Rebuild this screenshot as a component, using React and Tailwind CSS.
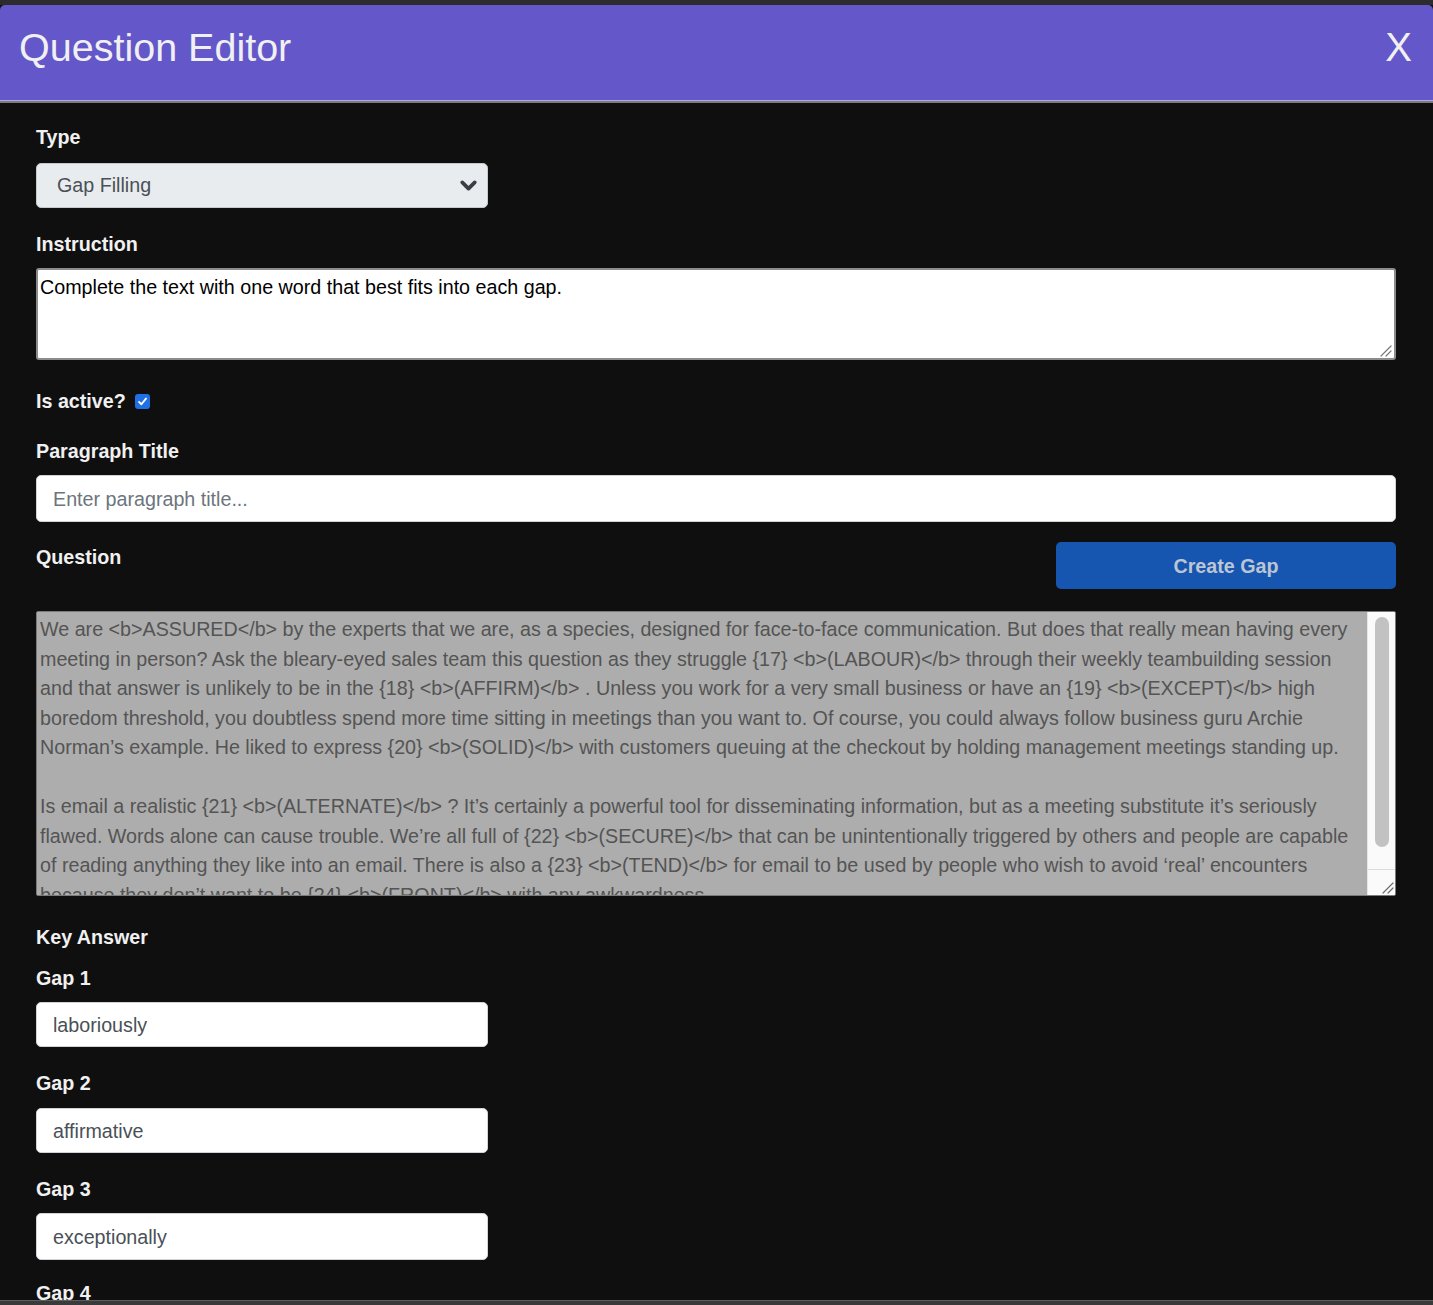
import { ChevronDown } from "lucide-react"

const QUESTION_LINES = [
  "We are <b>ASSURED</b> by the experts that we are, as a species, designed for face-to-face communication. But does that really mean having every",
  "meeting in person? Ask the bleary-eyed sales team this question as they struggle {17} <b>(LABOUR)</b> through their weekly teambuilding session",
  "and that answer is unlikely to be in the {18} <b>(AFFIRM)</b> . Unless you work for a very small business or have an {19} <b>(EXCEPT)</b> high",
  "boredom threshold, you doubtless spend more time sitting in meetings than you want to. Of course, you could always follow business guru Archie",
  "Norman’s example. He liked to express {20} <b>(SOLID)</b> with customers queuing at the checkout by holding management meetings standing up.",
  "",
  "Is email a realistic {21} <b>(ALTERNATE)</b> ? It’s certainly a powerful tool for disseminating information, but as a meeting substitute it’s seriously",
  "flawed. Words alone can cause trouble. We’re all full of {22} <b>(SECURE)</b> that can be unintentionally triggered by others and people are capable",
  "of reading anything they like into an email. There is also a {23} <b>(TEND)</b> for email to be used by people who wish to avoid ‘real’ encounters",
  "because they don’t want to be {24} <b>(FRONT)</b> with any awkwardness",
]

const GAPS = [
  { label: "Gap 1", value: "laboriously", mt: "mt-[17px]", gap: "mt-[12px]", h: "h-[45px]" },
  { label: "Gap 2", value: "affirmative", mt: "mt-[24px]", gap: "mt-[13px]", h: "h-[45px]" },
  { label: "Gap 3", value: "exceptionally", mt: "mt-[24px]", gap: "mt-[12px]", h: "h-[47px]" },
]

function Label({ children, className = "" }) {
  return (
    <div className={`text-[19.7px] font-bold leading-[24px] text-[#f1f1f1] ${className}`}>{children}</div>
  )
}

function Grip({ color = "#8a8a8a" }) {
  return (
    <svg width="13" height="13" viewBox="0 0 13 13">
      <path d="M12 2 L2 12 M12 7 L7 12" stroke={color} strokeWidth="1.2" strokeLinecap="round" />
    </svg>
  )
}

function TextField({ value, placeholder, className = "h-[45px]" }) {
  return (
    <div
      className={`flex items-center bg-white border border-[#ced4da] rounded-[5px] pl-[16px] pt-[2px] text-[19.7px] ${className} ${
        value ? "text-[#495057]" : "text-[#6c757d]"
      }`}
    >
      {value || placeholder}
    </div>
  )
}

export default function App() {
  return (
    <div className="h-[1305px] w-full overflow-hidden flex flex-col bg-[#0f0f0f] font-['Liberation_Sans',Arial,sans-serif]">
      <div className="h-[5px] bg-[#2c2c2f]" />

      {/* header */}
      <div className="h-[95px] bg-[#6457c9] rounded-t-[5px] flex items-center justify-between pl-[19px] pr-[21px]">
        <h1 className="text-[39.5px] leading-none text-[#f0f0f0] -mt-[10px]">Question Editor</h1>
        <button type="button" className="text-[40px] leading-none text-[#f0f0f0] -mt-[12px]">
          X
        </button>
      </div>
      <div className="h-[1px] bg-[#aea6f2]" />
      <div className="h-[2px] bg-[#7c7c7c]" />

      {/* body */}
      <div className="flex-1 overflow-hidden pt-[22px] pl-[36px] pr-[37px]">
        <Label>Type</Label>
        <div className="mt-[14px] w-[452px] h-[45px] flex items-center justify-between bg-[#e9ecef] border border-[#c4c9ce] rounded-[5px] pl-[20px] pr-[6px] text-[19.7px] text-[#495057]">
          <span>Gap Filling</span>
          <ChevronDown size={25} strokeWidth={3.6} className="text-[#3a3f45]" />
        </div>

        <Label className="mt-[24px]">Instruction</Label>
        <div className="relative mt-[12px] h-[92px] bg-white border-2 border-[#8c8c8c] rounded-[3px] pl-[2px] pt-[5px] text-[19.7px] leading-[24px] text-black">
          Complete the text with one word that best fits into each gap.
          <div className="absolute right-[2px] bottom-[1px]">
            <Grip color="#7a7a7a" />
          </div>
        </div>

        <div className="mt-[29px] flex items-center gap-[9px]">
          <Label>Is active?</Label>
          <span className="w-[15px] h-[15px] rounded-[3px] bg-[#1f6fe5] flex items-center justify-center">
            <svg width="11" height="11" viewBox="0 0 12 12">
              <path d="M2.2 6.4 L4.8 9 L9.8 2.8" fill="none" stroke="white" strokeWidth="2" strokeLinecap="round" strokeLinejoin="round" />
            </svg>
          </span>
        </div>

        <Label className="mt-[26px]">Paragraph Title</Label>
        <TextField placeholder="Enter paragraph title..." className="mt-[12px] h-[47px]" />

        <div className="mt-[20px] h-[47px] flex justify-between">
          <Label className="pt-[3px]">Question</Label>
          <button
            type="button"
            className="w-[340px] h-[47px] bg-[#1656b0] rounded-[5px] pt-[2px] text-[19.7px] font-bold text-[#bcc5d3]"
          >
            Create Gap
          </button>
        </div>

        <div className="mt-[22px] h-[285px] flex bg-[#adadad] border border-[#7a7a7a] rounded-[2px] overflow-hidden">
          <div className="flex-1 overflow-hidden pl-[3px] pt-[3px] text-[19.7px] leading-[29.5px] text-[#545454]">
            {QUESTION_LINES.map((line, i) => (
              <div key={i} className="whitespace-nowrap h-[29.5px]">
                {line}
              </div>
            ))}
          </div>
          <div className="w-[28px] bg-[#fafafa] border-l border-[#e6e6e6] flex flex-col">
            <div className="mt-[5px] ml-[7px] w-[14px] h-[230px] rounded-full bg-[#c2c2c2]" />
            <div className="flex-1" />
            <div className="h-[26px] border-t border-[#dcdcdc] flex items-end justify-end pr-[1px] pb-[1px]">
              <Grip color="#6e6e6e" />
            </div>
          </div>
        </div>

        <Label className="mt-[29px]">Key Answer</Label>
        {GAPS.map((g) => (
          <div key={g.label}>
            <Label className={g.mt}>{g.label}</Label>
            <div className={`${g.gap} w-[452px]`}>
              <TextField value={g.value} className={g.h} />
            </div>
          </div>
        ))}
        <Label className="mt-[21px]">Gap 4</Label>
      </div>

      <div className="h-[1px] bg-[#5e5e5e]" />
      <div className="h-[4px] bg-[#3a3a3a]" />
    </div>
  )
}
